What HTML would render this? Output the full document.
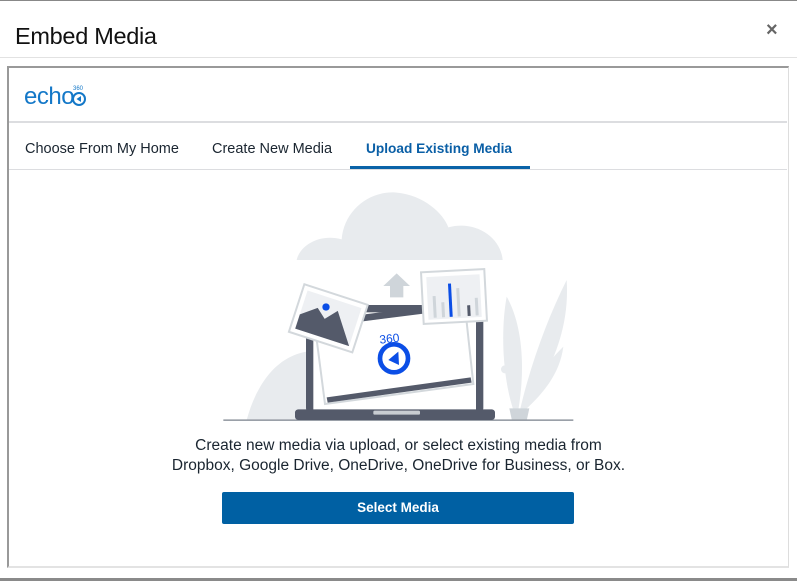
<!DOCTYPE html>
<html><head><style>
html,body{margin:0;padding:0;background:#fff;width:797px;height:581px;overflow:hidden;font-family:"Liberation Sans",sans-serif;position:relative}
.a{position:absolute}
</style></head><body>
<div class="a" style="left:0;top:0;width:797px;height:1px;background:#888"></div>
<div class="a" style="left:15px;top:23px;font-size:23.5px;color:#111;letter-spacing:-0.3px">Embed Media</div>
<div class="a" style="left:766px;top:19px;font-size:20px;color:#666;font-weight:bold">×</div>
<div class="a" style="left:0;top:57px;width:797px;height:1px;background:#e2e2e2"></div>
<div class="a" style="left:7px;top:66px;width:779px;height:498px;border:1px solid #aaa;border-top:2px solid #999;border-left:2px solid #999;border-right:1px solid #ddd;border-bottom:2px solid #e3e3e3"></div>
<div class="a" style="left:24px;top:83px;font-size:24px;color:#1478c8;letter-spacing:-0.5px">echo</div>
<svg class="a" style="left:70px;top:84px" width="20" height="24"><text x="3" y="6" font-size="6" fill="#1478c8" font-family="Liberation Sans">360</text><circle cx="9" cy="15" r="6" fill="none" stroke="#1478c8" stroke-width="2"/><path d="M11,12 L6.5,15 L11,18Z" fill="#1478c8"/></svg>
<div class="a" style="left:9px;top:121px;width:778px;height:2px;background:#dcdde0"></div>
<div class="a" style="left:25px;top:141px;font-size:14.5px;color:#1a2530">Choose From My Home</div>
<div class="a" style="left:212px;top:141px;font-size:14.5px;color:#1a2530">Create New Media</div>
<div class="a" style="left:366px;top:141px;font-size:13.7px;color:#0a5fa6;font-weight:bold">Upload Existing Media</div>
<div class="a" style="left:350px;top:166px;width:180px;height:3px;background:#0a63a8"></div>
<div class="a" style="left:9px;top:169px;width:778px;height:1px;background:#dcdde0"></div>
<svg class="a" style="left:220px;top:180px" width="360" height="245" viewBox="0 0 1080 735">
<path d="M230,240 C240,195 300,160 365,178 C372,90 450,30 530,38 C610,45 670,100 685,142 C765,120 842,170 848,240 Z" fill="#e8ebee"/>
<path d="M80,720 C110,610 170,530 260,515 L300,720Z" fill="#e8ebee"/>
<path d="M880,690 C850,600 840,460 860,350 C900,420 920,540 895,690Z" fill="#e8ebee"/>
<path d="M900,690 C930,560 980,420 1040,300 C1050,450 990,580 910,690Z" fill="#e8ebee"/>
<path d="M905,690 C930,620 970,560 1030,500 C1020,580 970,640 915,690Z" fill="#e8ebee"/>
<circle cx="855" cy="568" r="12" fill="#e8ebee"/>
<path d="M858,575 C870,620 885,660 890,690" stroke="#e8ebee" stroke-width="5" fill="none"/>
<path d="M868,685 L928,685 L920,722 L876,722Z" fill="#cfd5da"/>
<rect x="10" y="718" width="1050" height="5" fill="#9aa0a8"/>
<rect x="258" y="375" width="532" height="325" rx="16" fill="#545a6a"/>
<rect x="280" y="397" width="488" height="300" fill="#fff"/>
<rect x="225" y="688" width="600" height="32" rx="10" fill="#545a6a"/>
<rect x="460" y="692" width="140" height="12" rx="4" fill="#c8ccd1"/>
<polygon points="285,440 735,380 760,612 315,672" fill="#fff" stroke="#d3d8dc" stroke-width="6"/>
<polygon points="320,652 752,592 755,608 323,668" fill="#545a6a"/>
<polygon points="420,405 615,380 617,400 422,425" fill="#545a6a"/>
<path d="M490,318 L530,280 L570,318 L550,318 L550,352 L510,352 L510,318Z" fill="#cfd5da"/>
<g transform="rotate(18 325 415)"><rect x="225" y="340" width="200" height="150" fill="#fff" stroke="#d3d8dc" stroke-width="6"/><rect x="240" y="355" width="170" height="120" fill="#eef0f3"/><path d="M240,475 L240,430 L285,395 L315,420 L345,385 L410,475Z" fill="#545a6a"/></g>
<circle cx="318" cy="381" r="11" fill="#0b4ee6"/>
<g transform="rotate(-3 702 350)"><rect x="607" y="272" width="190" height="155" fill="#fff" stroke="#d3d8dc" stroke-width="6"/><rect x="622" y="287" width="160" height="128" fill="#eef0f3"/><rect x="638" y="345" width="9" height="65" fill="#cfd5da"/><rect x="663" y="365" width="9" height="45" fill="#cfd5da"/><rect x="686" y="310" width="9" height="100" fill="#0b4ee6"/><rect x="710" y="325" width="9" height="85" fill="#cfd5da"/><rect x="740" y="378" width="9" height="32" fill="#545a6a"/><rect x="764" y="357" width="9" height="53" fill="#cfd5da"/></g>
<text x="478" y="488" font-size="36" fill="#0b4ee6" font-family="Liberation Sans" transform="rotate(-6 510 475)">360</text>
<circle cx="522" cy="535" r="42" fill="none" stroke="#0b4ee6" stroke-width="14"/>
<path d="M535,515 L505,540 L537,555Z" fill="#0b4ee6"/>
</svg>
<div class="a" style="left:0;top:436px;width:797px;text-align:center;font-size:15.5px;line-height:19.5px;color:#1a2530">Create new media via upload, or select existing media from<br>Dropbox, Google Drive, OneDrive, OneDrive for Business, or Box.</div>
<div class="a" style="left:222px;top:492px;width:352px;height:32px;background:#0060a3;border-radius:2px;color:#fff;font-weight:bold;font-size:13.5px;text-align:center;line-height:32px">Select Media</div>
<div class="a" style="left:0;top:578px;width:797px;height:3px;background:#8a8a8a"></div>
</body></html>
